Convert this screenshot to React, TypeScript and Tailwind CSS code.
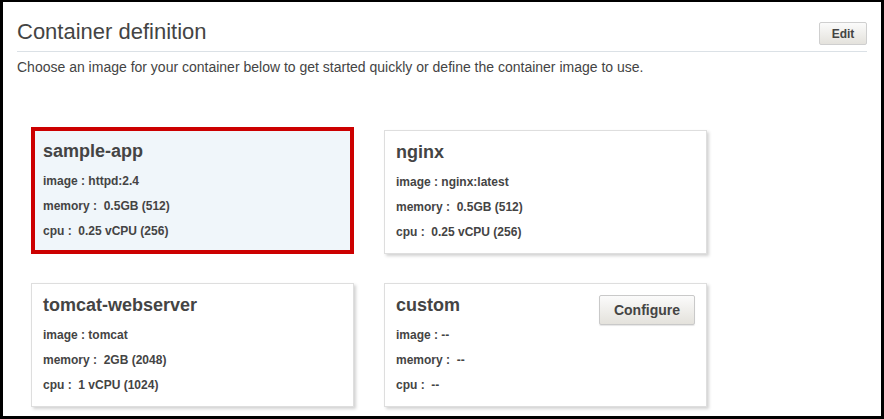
type Container = {
  name: string;
  image: string;
  memory: string;
  cpu: string;
  selected?: boolean;
  configurable?: boolean;
};

const containers: Container[] = [
  { name: "sample-app", image: "httpd:2.4", memory: " 0.5GB (512)", cpu: " 0.25 vCPU (256)", selected: true },
  { name: "nginx", image: "nginx:latest", memory: " 0.5GB (512)", cpu: " 0.25 vCPU (256)" },
  { name: "tomcat-webserver", image: "tomcat", memory: " 2GB (2048)", cpu: " 1 vCPU (1024)" },
  { name: "custom", image: "--", memory: " --", cpu: " --", configurable: true },
];

function ContainerCard({ c }: { c: Container }) {
  const box = c.selected
    ? "-mt-[3px] border-4 border-[#cc0000] bg-[#f0f6fa] pt-[10px] px-[8px]"
    : "border border-[#dedede] bg-white shadow-[2px_2px_3px_rgba(0,0,0,0.18)] pt-[11px] px-[11px]";

  return (
    <div className={`box-border ${box}`}>
      <div className="flex h-[21px] items-start justify-between">
        <h3 className="text-[18px] font-bold leading-[21px] text-[#444]">{c.name}</h3>
        {c.configurable && (
          <button className="h-[30px] w-[96px] shrink-0 rounded-[2px] border border-[#c9c9c9] bg-gradient-to-b from-[#fbfbfb] to-[#e4e2dc] text-[14px] font-bold text-[#444] shadow-[0_1px_1px_rgba(0,0,0,0.1)]">
            Configure
          </button>
        )}
      </div>
      <div className="mt-[7px] whitespace-pre text-[12px] font-bold leading-[25px] text-[#444]">
        <div>image : {c.image}</div>
        <div>memory : {c.memory}</div>
        <div>cpu : {c.cpu}</div>
      </div>
    </div>
  );
}

export default function App() {
  return (
    <div className="box-border h-[419px] w-[884px] overflow-hidden border-t-2 border-r-[3px] border-b-[3px] border-l-[3px] border-black bg-white px-[14px] pt-[17px] font-['Liberation_Sans',Arial,sans-serif] text-[#444]">
      <div className="flex items-end justify-between border-b border-[#dbe1e6] pb-[6px]">
        <h2 className="text-[22px] font-normal leading-[26px] text-[#444]">Container definition</h2>
        <button className="mb-0 h-[23px] w-[48px] rounded-[2px] border border-[#cfcfcf] bg-gradient-to-b from-[#fbfbfb] to-[#e4e2dc] text-[12px] font-bold text-[#444]">
          Edit
        </button>
      </div>
      <p className="mt-[5px] text-[14px] leading-[20px] text-[#444]">
        Choose an image for your container below to get started quickly or define the container image to use.
      </p>

      <div className="mt-[53px] ml-[14px] grid grid-cols-[323px_323px] auto-rows-[124px] gap-x-[30px] gap-y-[29px]">
        {containers.map((c) => (
          <ContainerCard key={c.name} c={c} />
        ))}
      </div>
    </div>
  );
}
